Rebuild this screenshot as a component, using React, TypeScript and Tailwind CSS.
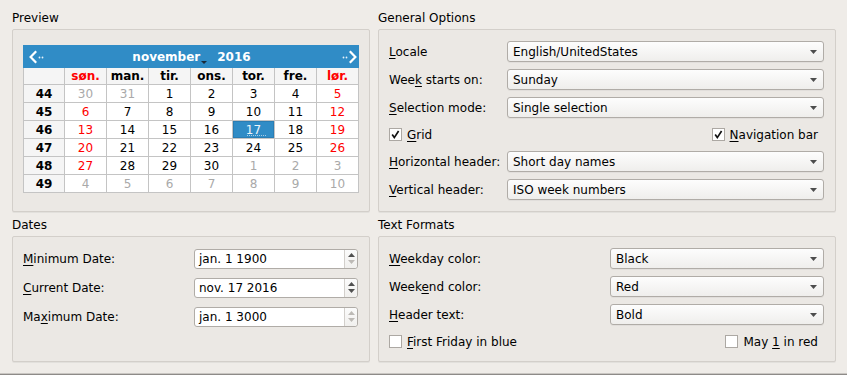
import React from "react";

// mnemonic label: one char underlined
function U({ t, i }: { t: string; i: number }) {
  return (
    <span className="whitespace-nowrap">
      {t.slice(0, i)}
      <span className="underline decoration-1 underline-offset-2">{t[i]}</span>
      {t.slice(i + 1)}
    </span>
  );
}

function GroupTitle({ children, first }: { children: React.ReactNode; first?: boolean }) {
  return (
    <div className={`${first ? "" : "mt-[5px]"} mb-[2px] h-[17px] leading-[17px] text-[12px]`}>
      {children}
    </div>
  );
}

function Combo({ value }: { value: string }) {
  return (
    <div className="flex h-[21px] items-center justify-between rounded-[3px] border border-[#b0aca7] bg-gradient-to-b from-[#fdfdfd] to-[#efeeec] pl-[5px] pr-[6px] shadow-[0_1px_0_rgba(0,0,0,0.04)]">
      <span className="whitespace-nowrap">{value}</span>
      <svg width="7" height="4" viewBox="0 0 7 4">
        <polygon points="0,0 7,0 3.5,4" fill="#4d4d4d" />
      </svg>
    </div>
  );
}

function Arrow({ up, on }: { up?: boolean; on: boolean }) {
  return (
    <svg width="7" height="4" viewBox="0 0 7 4">
      <polygon points={up ? "0,4 3.5,0 7,4" : "0,0 7,0 3.5,4"} fill={on ? "#505050" : "#bdbab6"} />
    </svg>
  );
}

function Spin({ value, up, down }: { value: string; up: boolean; down: boolean }) {
  return (
    <div className="flex h-[20px] rounded-[3px] border border-[#b0aca7] bg-white">
      <div className="flex flex-1 items-center pl-[4px] whitespace-nowrap">{value}</div>
      <div className="flex w-[13px] flex-col border-l border-[#d2cfcb] bg-gradient-to-b from-[#fbfbfb] to-[#f1f0ee] rounded-r-[3px]">
        <div className="flex flex-1 items-center justify-center pt-[1px]">
          <Arrow up on={up} />
        </div>
        <div className="flex flex-1 items-center justify-center pb-[2px]">
          <Arrow on={down} />
        </div>
      </div>
    </div>
  );
}

function Check({ checked, label }: { checked: boolean; label: React.ReactNode }) {
  return (
    <div className="flex items-center gap-[5px]">
      <div className="flex h-[13px] w-[13px] items-center justify-center border border-[#aca8a3] bg-white">
        {checked && (
          <svg width="11" height="11" viewBox="0 0 11 11">
            <path d="M2.2 5.6 L4.3 8.6 L8.6 2" fill="none" stroke="#111" strokeWidth="1.7" />
          </svg>
        )}
      </div>
      {label}
    </div>
  );
}

const GRAY = "text-[#a9a9a9]";
const RED = "text-[#ff0000]";

type Day = { n: number; c: "k" | "r" | "g" | "s" };
const rows: { wk: number; days: Day[] }[] = [
  { wk: 44, days: [{ n: 30, c: "g" }, { n: 31, c: "g" }, { n: 1, c: "k" }, { n: 2, c: "k" }, { n: 3, c: "k" }, { n: 4, c: "k" }, { n: 5, c: "r" }] },
  { wk: 45, days: [{ n: 6, c: "r" }, { n: 7, c: "k" }, { n: 8, c: "k" }, { n: 9, c: "k" }, { n: 10, c: "k" }, { n: 11, c: "k" }, { n: 12, c: "r" }] },
  { wk: 46, days: [{ n: 13, c: "r" }, { n: 14, c: "k" }, { n: 15, c: "k" }, { n: 16, c: "k" }, { n: 17, c: "s" }, { n: 18, c: "k" }, { n: 19, c: "r" }] },
  { wk: 47, days: [{ n: 20, c: "r" }, { n: 21, c: "k" }, { n: 22, c: "k" }, { n: 23, c: "k" }, { n: 24, c: "k" }, { n: 25, c: "k" }, { n: 26, c: "r" }] },
  { wk: 48, days: [{ n: 27, c: "r" }, { n: 28, c: "k" }, { n: 29, c: "k" }, { n: 30, c: "k" }, { n: 1, c: "g" }, { n: 2, c: "g" }, { n: 3, c: "g" }] },
  { wk: 49, days: [{ n: 4, c: "g" }, { n: 5, c: "g" }, { n: 6, c: "g" }, { n: 7, c: "g" }, { n: 8, c: "g" }, { n: 9, c: "g" }, { n: 10, c: "g" }] },
];
const heads = ["søn.", "man.", "tir.", "ons.", "tor.", "fre.", "lør."];

function Calendar() {
  return (
    <div className="w-[336px]">
      <div className="grid h-[23px] grid-cols-[1fr_auto_1fr] items-center bg-[#308cc6] pl-[6px] pr-[2px] text-white">
        <svg width="16" height="14" viewBox="0 0 16 14">
          <path d="M7.2 1.2 L1.6 7 L7.2 12.8" fill="none" stroke="#fff" strokeWidth="2.2" />
          <circle cx="10.5" cy="7.5" r="0.9" fill="#e8f1f8" />
          <circle cx="13.5" cy="7.5" r="0.9" fill="#e8f1f8" />
        </svg>
        <div className="flex items-center pr-[3px] font-bold">
          <span>november</span>
          <span className="relative h-[14px] w-[17px]">
            <svg className="absolute bottom-0 left-[1px]" width="6" height="3" viewBox="0 0 6 3">
              <polygon points="0,0 6,0 3,3" fill="#1b2b3a" />
            </svg>
          </span>
          <span>2016</span>
        </div>
        <svg className="justify-self-end" width="16" height="14" viewBox="0 0 16 14">
          <circle cx="2.5" cy="7.5" r="0.9" fill="#e8f1f8" />
          <circle cx="5.5" cy="7.5" r="0.9" fill="#e8f1f8" />
          <path d="M8.8 1.2 L14.4 7 L8.8 12.8" fill="none" stroke="#fff" strokeWidth="2.2" />
        </svg>
      </div>
      <div className="grid grid-cols-[41px_repeat(7,42px)] border-l border-[#c4c4c4]">
        <div className="h-[17px] border-r border-b border-[#c4c4c4] bg-[#f5f5f5]" />
        {heads.map((h, i) => (
          <div
            key={h}
            className={`flex h-[17px] items-center justify-center border-r border-b border-[#c4c4c4] bg-[#f5f5f5] font-bold ${i === 0 || i === 6 ? RED : ""}`}
          >
            {h}
          </div>
        ))}
        {rows.map((r) => (
          <React.Fragment key={r.wk}>
            <div className="flex h-[18px] items-center justify-center border-r border-b border-[#c4c4c4] bg-[#f5f5f5] font-bold">
              {r.wk}
            </div>
            {r.days.map((d, i) =>
              d.c === "s" ? (
                <div key={i} className="flex h-[18px] items-center justify-center border-r border-b border-[#c4c4c4] bg-white">
                  <div className="relative flex h-full w-full items-center justify-center border border-[#2b7db3] bg-[#308cc6] text-[#eef5fb]">
                    {d.n}
                    <span className="absolute bottom-[1px] left-[13px] right-[7px] border-b border-dotted border-[#a9cbe3]" />
                  </div>
                </div>
              ) : (
                <div
                  key={i}
                  className={`flex h-[18px] items-center justify-center border-r border-b border-[#c4c4c4] bg-white ${d.c === "g" ? GRAY : d.c === "r" ? RED : ""}`}
                >
                  {d.n}
                </div>
              )
            )}
          </React.Fragment>
        ))}
      </div>
    </div>
  );
}

const box = "rounded-[2px] border border-[#d3cfca] bg-[#ebe8e4] shadow-[0_1px_0_rgba(0,0,0,0.05)]";

export default function App() {
  return (
    <div className="flex h-[375px] w-[847px] flex-col bg-[#efece8] font-['DejaVu_Sans','Liberation_Sans',sans-serif] text-[12px] text-black">
      <div className="grid flex-1 grid-cols-[358px_458px] gap-x-[8px] pl-[12px] pt-[10px]">
        {/* left column */}
        <div className="flex flex-col">
          <GroupTitle first>Preview</GroupTitle>
          <div className={`${box} h-[183px] pl-[10px] pt-[15px]`}>
            <Calendar />
          </div>
          <GroupTitle>Dates</GroupTitle>
          <div className={`${box} h-[126px] pl-[10px] pr-[11px] pt-[12px]`}>
            <div className="grid grid-cols-[171px_1fr] items-center gap-y-[9px]">
              <U t="Minimum Date:" i={0} />
              <Spin value="jan. 1 1900" up={true} down={false} />
              <U t="Current Date:" i={0} />
              <Spin value="nov. 17 2016" up={true} down={true} />
              <U t="Maximum Date:" i={2} />
              <Spin value="jan. 1 3000" up={false} down={false} />
            </div>
          </div>
        </div>

        {/* right column */}
        <div className="flex flex-col">
          <GroupTitle first>General Options</GroupTitle>
          <div className={`${box} h-[183px] pl-[10px] pr-[11px] pt-[11px]`}>
            <div className="flex flex-col gap-y-[7px]">
              <div className="grid grid-cols-[118px_1fr] items-center">
                <U t="Locale" i={0} />
                <Combo value="English/UnitedStates" />
              </div>
              <div className="grid grid-cols-[118px_1fr] items-center">
                <U t="Week starts on:" i={3} />
                <Combo value="Sunday" />
              </div>
              <div className="grid grid-cols-[118px_1fr] items-center">
                <U t="Selection mode:" i={0} />
                <Combo value="Single selection" />
              </div>
              <div className="flex h-[19px] items-center justify-between pr-[6px]">
                <Check checked label={<U t="Grid" i={0} />} />
                <Check checked label={<U t="Navigation bar" i={0} />} />
              </div>
              <div className="grid grid-cols-[118px_1fr] items-center">
                <U t="Horizontal header:" i={0} />
                <Combo value="Short day names" />
              </div>
              <div className="grid grid-cols-[118px_1fr] items-center">
                <U t="Vertical header:" i={0} />
                <Combo value="ISO week numbers" />
              </div>
            </div>
          </div>
          <GroupTitle>Text Formats</GroupTitle>
          <div className={`${box} h-[126px] pl-[10px] pr-[11px] pt-[11px]`}>
            <div className="flex flex-col gap-y-[7px]">
              <div className="grid grid-cols-[221px_1fr] items-center">
                <U t="Weekday color:" i={0} />
                <Combo value="Black" />
              </div>
              <div className="grid grid-cols-[221px_1fr] items-center">
                <U t="Weekend color:" i={4} />
                <Combo value="Red" />
              </div>
              <div className="grid grid-cols-[221px_1fr] items-center">
                <U t="Header text:" i={0} />
                <Combo value="Bold" />
              </div>
              <div className="flex h-[19px] items-center justify-between pr-[6px]">
                <Check checked={false} label={<U t="First Friday in blue" i={0} />} />
                <Check checked={false} label={<U t="May 1 in red" i={4} />} />
              </div>
            </div>
          </div>
        </div>
      </div>
      <div className="h-[1px] bg-[#c9c6c2]" />
      <div className="h-[1px] bg-[#8e8b88]" />
    </div>
  );
}
